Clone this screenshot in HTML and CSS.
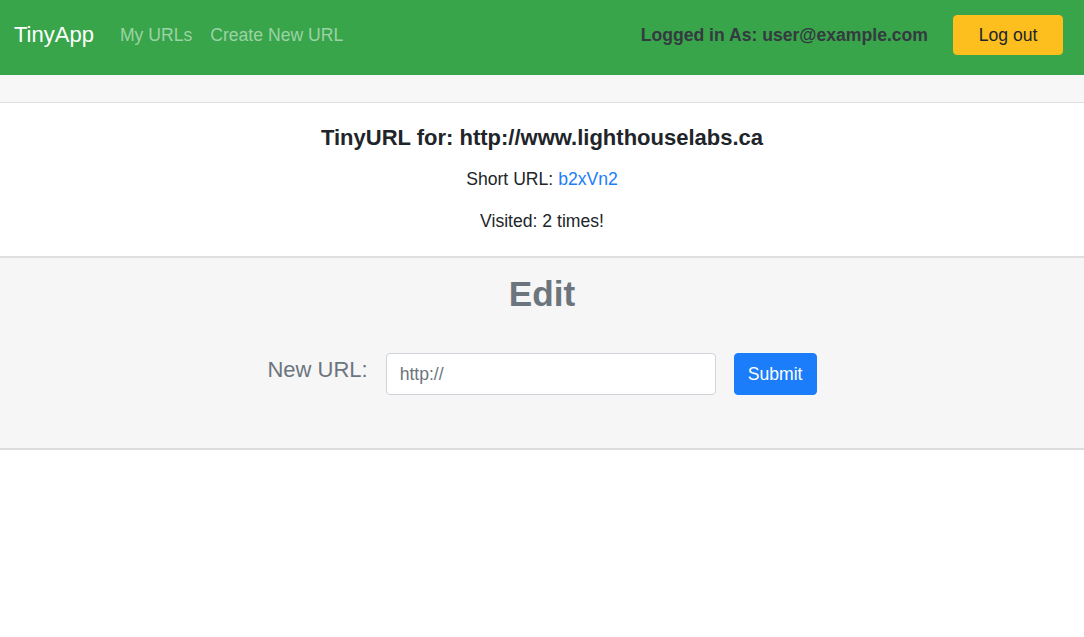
FILE: index.html
```html
<!DOCTYPE html>
<html lang="en">
<head>
<meta charset="utf-8">
<title>TinyApp</title>
<link rel="stylesheet" href="styles.css">
</head>
<body>
<nav class="navbar">
  <a class="brand" href="#">TinyApp</a>
  <div class="nav-links">
    <a class="nav-link" href="#">My URLs</a>
    <a class="nav-link" href="#">Create New URL</a>
  </div>
  <div class="nav-right">
    <span class="logged">Logged in As: user@example.com</span>
    <button class="btn-logout" type="button">Log out</button>
  </div>
</nav>
<main class="card">
  <div class="card-header"></div>
  <div class="card-body">
    <h5 class="card-title">TinyURL for: http://www.lighthouselabs.ca</h5>
    <p class="card-text">Short URL: <a class="link" href="#">b2xVn2</a></p>
    <p class="card-text">Visited: 2 times!</p>
  </div>
  <div class="card-footer">
    <h2 class="edit-title">Edit</h2>
    <form class="edit-form">
      <label class="form-label" for="newurl">New URL:</label>
      <input class="form-input" id="newurl" type="text" placeholder="http://">
      <button class="btn-submit" type="submit">Submit</button>
    </form>
  </div>
</main>
</body>
</html>
```

FILE: styles.css
```css
* { box-sizing: border-box; }
html, body {
  margin: 0;
  padding: 0;
  background: #fff;
  font-family: "Liberation Sans", Arial, sans-serif;
  font-size: 17.6px;
  color: #212529;
}
.navbar {
  display: flex;
  align-items: center;
  height: 75px;
  padding: 15px 21px 20px 14px;
  background: #38a54a;
}
.brand {
  font-size: 22px;
  color: #fff;
  text-decoration: none;
  line-height: 40px;
  margin-right: 17px;
}
.nav-links {
  display: flex;
  flex: 1;
}
.nav-link {
  color: #9cd2a5;
  text-decoration: none;
  padding: 0 9px;
  line-height: 40px;
}
.nav-right {
  display: flex;
  align-items: center;
  gap: 25px;
}
.logged {
  font-weight: bold;
  color: #343a40;
}
.btn-logout {
  font-family: inherit;
  font-size: 17.6px;
  width: 110px;
  height: 40px;
  background: #fdbf1e;
  color: #212529;
  border: 1px solid #fdbf1e;
  border-radius: 4px;
  padding: 0;
}
.card {
  display: block;
}
.card-header {
  height: 28px;
  background: #f7f7f7;
  border-bottom: 1px solid #dfdfdf;
}
.card-body {
  text-align: center;
  padding: 22px 20px 22px;
  border-bottom: 2px solid #dfdfdf;
}
.card-title {
  margin: 0 0 15px;
  font-size: 22px;
  line-height: 26px;
  font-weight: bold;
}
.card-text {
  margin: 0 0 16px;
  line-height: 26px;
}
.card-text:last-child { margin-bottom: 0; }
.link {
  color: #1b7dfa;
  text-decoration: none;
}
.card-footer {
  background: #f6f6f6;
  padding: 15px 20px 53px;
  border-bottom: 2px solid #dcdcdc;
  text-align: center;
}
.edit-title {
  margin: 0 0 38px;
  font-size: 35.2px;
  line-height: 42px;
  font-weight: bold;
  color: #6c757d;
}
.edit-form {
  display: flex;
  justify-content: center;
  align-items: flex-start;
  gap: 18px;
}
.form-label {
  font-size: 22px;
  line-height: 33px;
  color: #6c757d;
}
.form-input {
  width: 330px;
  height: 42px;
  border: 1px solid #ced4da;
  border-radius: 4px;
  padding: 0 13px;
  font-family: inherit;
  font-size: 17.6px;
  color: #495057;
  background: #fff;
}
.form-input::placeholder { color: #6c757d; }
.btn-submit {
  width: 83px;
  height: 42px;
  font-family: inherit;
  font-size: 17.6px;
  background: #1b7dfa;
  color: #fff;
  border: 1px solid #1b7dfa;
  border-radius: 4px;
  padding: 0;
}
```
